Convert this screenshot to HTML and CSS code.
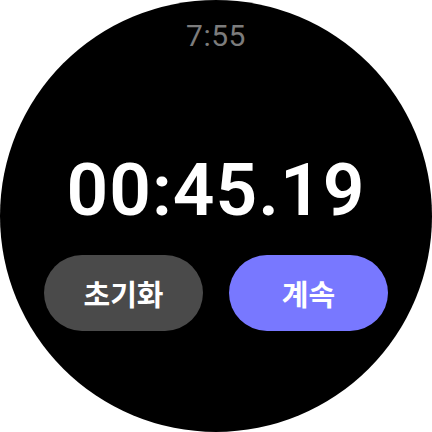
FILE: index.html
```html
<!DOCTYPE html>
<html lang="ko">
<head>
<meta charset="utf-8">
<link rel="stylesheet" href="styles.css">
</head>
<body>
<div class="watch">
  <div class="clock">7:55</div>
  <div class="timer">00:45.19</div>
  <div class="actions">
    <div class="btn btn-reset">초기화</div>
    <div class="btn btn-resume">계속</div>
  </div>
</div>
</body>
</html>
```
FILE: styles.css
```css
html, body {
  margin: 0;
  padding: 0;
  background: #ffffff;
}
.watch {
  width: 432px;
  height: 432px;
  border-radius: 50%;
  background: #000000;
  display: flex;
  flex-direction: column;
  align-items: center;
  box-sizing: border-box;
  padding-top: 18px;
  font-family: Roboto, "Noto Sans CJK KR", sans-serif;
}
.clock {
  color: #7c7c7c;
  font-size: 30px;
  line-height: 36px;
  font-weight: 400;
  letter-spacing: 0.5px;
}
.timer {
  color: #ffffff;
  font-size: 73px;
  line-height: 80px;
  font-weight: 600;
  margin-top: 96px;
  letter-spacing: 1px;
}
.actions {
  display: flex;
  gap: 26px;
  margin-top: 25px;
}
.btn {
  width: 159px;
  height: 76px;
  border-radius: 38px;
  display: flex;
  align-items: center;
  justify-content: center;
  color: #ffffff;
  font-family: "Noto Sans CJK KR", sans-serif;
  font-size: 29px;
  font-weight: 700;
}
.btn-reset {
  background: #4a4a4a;
}
.btn-resume {
  background: #7878ff;
}
```
